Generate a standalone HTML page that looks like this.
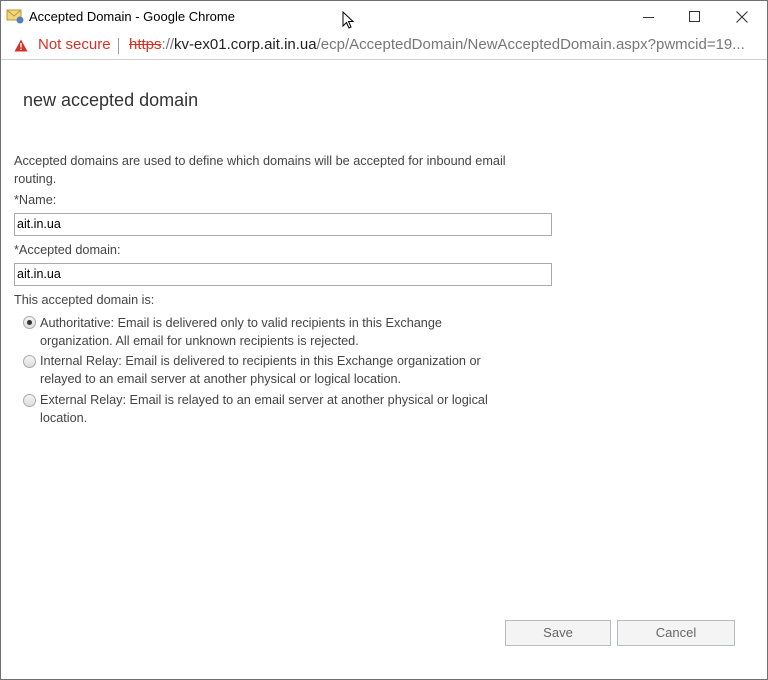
<!DOCTYPE html>
<html><head><meta charset="utf-8"><style>
*{margin:0;padding:0;box-sizing:border-box}
body{width:768px;height:680px;overflow:hidden;background:#fff;font-family:"Segoe UI","Liberation Sans","DejaVu Sans",sans-serif;position:relative}
.win{position:absolute;left:0;top:0;width:768px;height:680px;border:1px solid #707070}
.title{position:absolute;left:0;top:0;width:766px;height:31px;background:#fff;font-size:13px;color:#000}
.addr{position:absolute;left:0;top:31px;width:766px;height:28px;background:#fff;border-bottom:1px solid #d0d0d0;font-size:15px}
.t{position:absolute;white-space:nowrap}
.lbl{font-size:12.7px;color:#444}
.box{position:absolute;left:13px;width:538px;height:23px;border:1px solid #aaa;font-size:12.5px;color:#000;padding:3px 0 0 2px}
.radio{position:absolute;left:22px;width:13px;height:13px;border-radius:50%;border:1px solid #aaa;background:linear-gradient(#f4f4f4,#ddd)}
.btn{position:absolute;top:619px;height:26px;border:1px solid #b8bcc0;background:#f4f4f4;color:#666;font-size:13px;text-align:center;line-height:24px}
</style></head><body>
<div class="win">
<div class="title">
 <svg style="position:absolute;left:5px;top:7px" width="18" height="16" viewBox="0 0 18 16"><rect x="1" y="2" width="14" height="10" fill="#f3d67a" stroke="#b89a3a"/><path d="M1 2 L8 8 L15 2" fill="none" stroke="#b89a3a"/><circle cx="14" cy="12" r="3.5" fill="#5a7fc0"/></svg>
 <span class="t" style="left:28px;top:8px">Accepted Domain - Google Chrome</span>
 <svg style="position:absolute;left:341px;top:10px" width="12" height="18" viewBox="0 0 12 18"><path d="M1 1 L1 15 L4.5 11.5 L7 17 L9 16 L6.5 10.5 L11 10.5 Z" fill="#fff" stroke="#000"/></svg>
 <div style="position:absolute;left:642px;top:16px;width:11px;height:1px;background:#333"></div>
 <div style="position:absolute;left:688px;top:10px;width:11px;height:11px;border:1px solid #333"></div>
 <svg style="position:absolute;left:735px;top:10px" width="12" height="12"><path d="M0.5 0.5 L11.5 11.5 M11.5 0.5 L0.5 11.5" stroke="#333" stroke-width="1.1"/></svg>
</div>
<div class="addr">
 <svg style="position:absolute;left:13px;top:7px" width="14" height="13" viewBox="0 0 14 13"><path d="M7 0.5 L13.5 12.5 L0.5 12.5 Z" fill="#d93025"/><rect x="6.3" y="4" width="1.4" height="4.5" fill="#fff"/><rect x="6.3" y="9.6" width="1.4" height="1.4" fill="#fff"/></svg>
 <span class="t" style="left:37px;top:4px;color:#d93025">Not secure</span>
 <div style="position:absolute;left:117px;top:6px;width:1px;height:16px;background:#999"></div>
 <span class="t" style="left:128px;top:4px"><span style="color:#d93025;text-decoration:line-through">https</span><span style="color:#777">://</span><span style="color:#222">kv-ex01.corp.ait.in.ua</span><span style="color:#777">/ecp/AcceptedDomain/NewAcceptedDomain.aspx?pwmcid=19...</span></span>
</div>
<span class="t" style="left:22px;top:89px;font-size:18px;color:#333;font-weight:300">new accepted domain</span>
<div class="t lbl" style="left:13px;top:151px;line-height:18px;white-space:normal;width:508px">Accepted domains are used to define which domains will be accepted for inbound email routing.</div>
<span class="t lbl" style="left:13px;top:192px">*Name:</span>
<div class="box" style="top:212px">ait.in.ua</div>
<span class="t lbl" style="left:13px;top:242px">*Accepted domain:</span>
<div class="box" style="top:262px">ait.in.ua</div>
<span class="t lbl" style="left:13px;top:292px">This accepted domain is:</span>
<div class="radio" style="top:315px"><div style="position:absolute;left:3px;top:3px;width:5px;height:5px;border-radius:50%;background:#333"></div></div>
<div class="t lbl" style="left:39px;top:313px;line-height:18px">Authoritative: Email is delivered only to valid recipients in this Exchange<br>organization. All email for unknown recipients is rejected.</div>
<div class="radio" style="top:354px"></div>
<div class="t lbl" style="left:39px;top:351px;line-height:18px">Internal Relay: Email is delivered to recipients in this Exchange organization or<br>relayed to an email server at another physical or logical location.</div>
<div class="radio" style="top:393px"></div>
<div class="t lbl" style="left:39px;top:390px;line-height:18px">External Relay: Email is relayed to an email server at another physical or logical<br>location.</div>
<div class="btn" style="left:504px;width:106px">Save</div>
<div class="btn" style="left:616px;width:118px">Cancel</div>
</div>
</body></html>
